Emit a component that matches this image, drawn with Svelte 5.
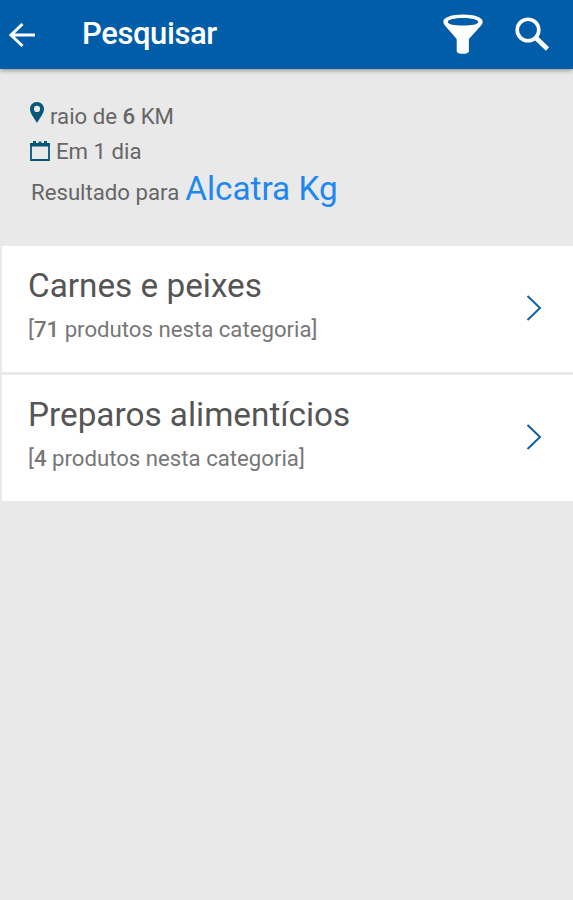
<script lang="ts">
  type Category = { name: string; count: number };

  const radius = 6;
  const days = 1;
  const term = 'Alcatra Kg';

  const categories: Category[] = [
    { name: 'Carnes e peixes', count: 71 },
    { name: 'Preparos alimentícios', count: 4 }
  ];
</script>

<div class="screen">
  <header class="toolbar">
    <button class="icon-btn back" type="button" aria-label="Voltar">
      <svg width="28" height="28" viewBox="0 0 28 28">
        <path d="M14.5 3 3 14l11.500 11M3.500 14H27" fill="none" stroke="currentColor" stroke-width="3" />
      </svg>
    </button>
    <h1>Pesquisar</h1>
    <button class="icon-btn filter" type="button" aria-label="Filtrar">
      <svg width="40" height="41" viewBox="0 0 40 41">
        <path
          fill="currentColor"
          fill-rule="evenodd"
          d="M20 .5C9 .5.3 3.300.3 7.500c0 2 1.200 3.500 2.700 5.200L13.700 25v12.300c0 3.400 12.200 3.400 12.200 0V25L37 12.700c1.500-1.700 2.700-3.200 2.700-5.200C39.700 3.300 31 .5 20 .5zM20 4c8.500 0 15.200 1.600 15.200 3.900S28.500 11.500 20 11.500 4.800 10.200 4.800 7.900 11.500 4 20 4z"
        />
      </svg>
    </button>
    <button class="icon-btn search" type="button" aria-label="Buscar">
      <svg width="36" height="36" viewBox="0 0 36 36">
        <circle cx="14" cy="13" r="10.800" fill="none" stroke="currentColor" stroke-width="3.600" />
        <path d="m22 21 11.500 11" stroke="currentColor" stroke-width="4.600" />
      </svg>
    </button>
  </header>

  <section class="summary">
    <p class="line">
      <svg class="pin" width="14" height="21" viewBox="0 0 14 21">
        <path
          fill="currentColor"
          fill-rule="evenodd"
          d="M7 0C3 0 0 3 0 7c0 4.500 4 8.500 7 14 3-5.500 7-9.500 7-14 0-4-3-7-7-7zm0 3.800a3.100 3.100 0 1 1 0 6.200 3.100 3.100 0 0 1 0-6.200z"
        />
      </svg>
      <span class="radius">raio de <b>{radius}</b> KM</span>
    </p>
    <p class="line">
      <svg class="calendar" width="20" height="20" viewBox="0 0 20 20">
        <path d="M1 4v15h18V4" fill="none" stroke="currentColor" stroke-width="1.800" />
        <path d="M0 2h3V0h3v2h2.500V.5h3V2H14V0h3v2h3v3.500H0z" fill="currentColor" />
      </svg>
      <span class="days">Em {days} dia</span>
    </p>
    <p class="result"><span class="label">Resultado para</span> <span class="term">{term}</span></p>
  </section>

  <ul class="categories">
    {#each categories as category}
      <li>
        <div class="text">
          <h2>{category.name}</h2>
          <p class="count">[<b>{category.count}</b> produtos nesta categoria]</p>
        </div>
        <svg class="chevron" width="16" height="26" viewBox="0 0 16 26">
          <path d="M1.500 1 14 13 1.500 25" fill="none" stroke="currentColor" stroke-width="2" />
        </svg>
      </li>
    {/each}
  </ul>
</div>

<style>
  :global(body) {
    margin: 0;
    background: #e9e9e9;
  }

  .screen {
    min-height: 900px;
    background: #e9e9e9;
    color: #666;
    font-family: Roboto, sans-serif;
  }

  h1,
  h2,
  p,
  ul {
    margin: 0;
    padding: 0;
    font-weight: 400;
    white-space: nowrap;
  }

  .toolbar {
    display: flex;
    align-items: center;
    height: 69px;
    box-sizing: border-box;
    padding: 0 23px 0 8px;
    background: #015da8;
    color: #fff;
    box-shadow: 0 1px 5px rgba(0, 0, 0, 0.45);
  }

  .icon-btn {
    display: block;
    padding: 0;
    border: 0;
    background: none;
    color: inherit;
    cursor: pointer;
  }

  .icon-btn svg {
    display: block;
  }

  h1 {
    flex: 1;
    margin-left: 46px;
    padding-bottom: 2px;
    font-size: 31px;
    font-weight: 500;
    letter-spacing: -0.4px;
    line-height: 66px;
  }

  .filter {
    margin-right: 31px;
  }

  .summary {
    height: 177px;
    box-sizing: border-box;
    padding: 30px 30px 0;
  }

  .line {
    display: flex;
    align-items: center;
    height: 35px;
    font-size: 22.2px;
    line-height: 35px;
  }

  .pin,
  .calendar {
    color: #075779;
  }

  .pin {
    margin: -8px 6px 0 0;
  }

  .calendar {
    margin: -1px 6px 0 0;
  }

  .result {
    height: 40px;
    padding-left: 1px;
    line-height: 40px;
  }

  .label {
    font-size: 22.2px;
  }

  .term {
    margin-left: 2px;
    font-size: 33.3px;
    color: #1e88ee;
  }

  b {
    font-weight: 500;
  }

  .categories {
    list-style: none;
    padding-left: 2px;
  }

  li {
    display: flex;
    align-items: center;
    justify-content: space-between;
    height: 126px;
    box-sizing: border-box;
    padding: 0 31px 2px 26px;
    background: #fff;
  }

  li + li {
    margin-top: 3px;
  }

  h2 {
    font-size: 33.3px;
    line-height: 42px;
    color: #555;
  }

  .count {
    font-size: 22.2px;
    line-height: 44px;
    color: #777;
  }

  .chevron {
    color: #0e61a6;
  }
</style>
